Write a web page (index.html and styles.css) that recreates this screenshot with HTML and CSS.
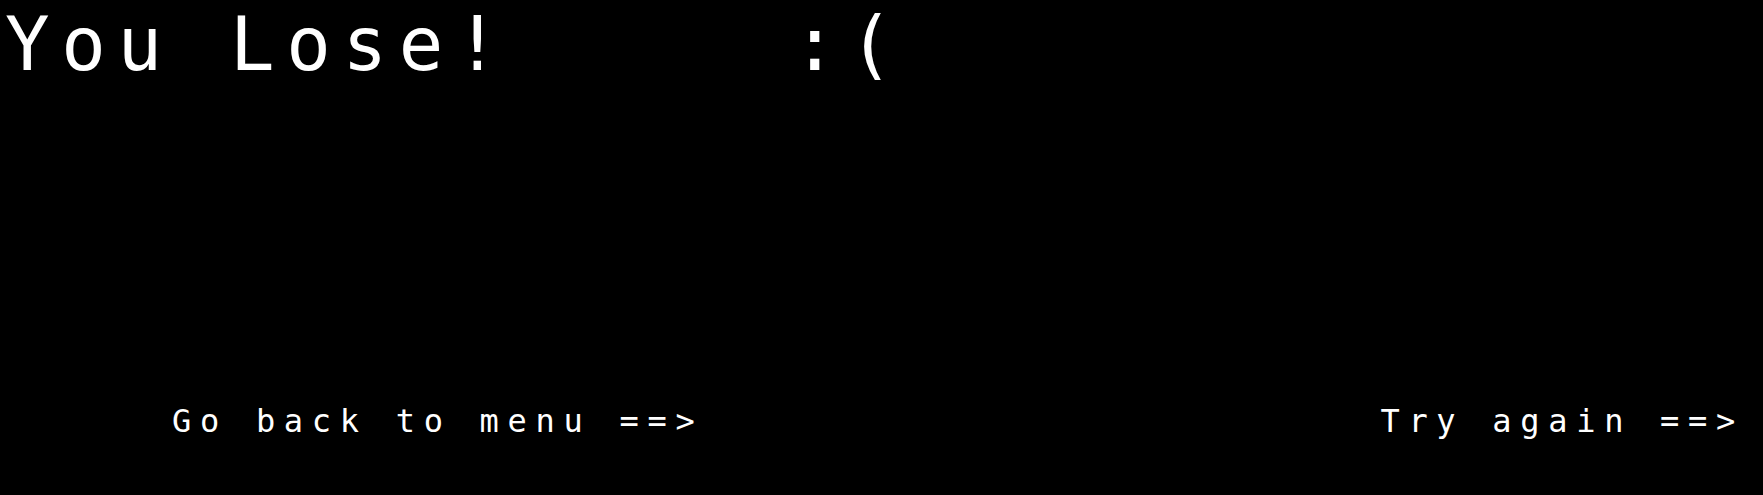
FILE: index.html
```html
<!DOCTYPE html>
<html lang="en">
<head>
<meta charset="utf-8">
<title>You Lose</title>
<link rel="stylesheet" href="styles.css">
</head>
<body>
<main class="screen">
  <h1 class="title">You Lose!     :(</h1>
  <nav class="actions">
    <a class="action" href="#">Go back to menu ==&gt;</a>
    <a class="action" href="#">Try again ==&gt;</a>
  </nav>
</main>
</body>
</html>
```
FILE: styles.css
```css
html, body {
  margin: 0;
  padding: 0;
  background: #000;
}

body {
  color: #fff;
  font-family: "DejaVu Sans Mono", monospace;
}

.screen {
  height: 495px;
  box-sizing: border-box;
  display: flex;
  flex-direction: column;
  justify-content: space-between;
  padding: 7px 19px 58px 5px;
}

.title {
  margin: 0;
  font-size: 74px;
  line-height: 74px;
  font-weight: normal;
  letter-spacing: 11.7px;
  white-space: pre;
}

.actions {
  display: flex;
  justify-content: space-between;
  padding-left: 167px;
}

.action {
  color: #fff;
  text-decoration: none;
  font-size: 32px;
  line-height: 32px;
  letter-spacing: 8.7px;
  white-space: pre;
}
```
